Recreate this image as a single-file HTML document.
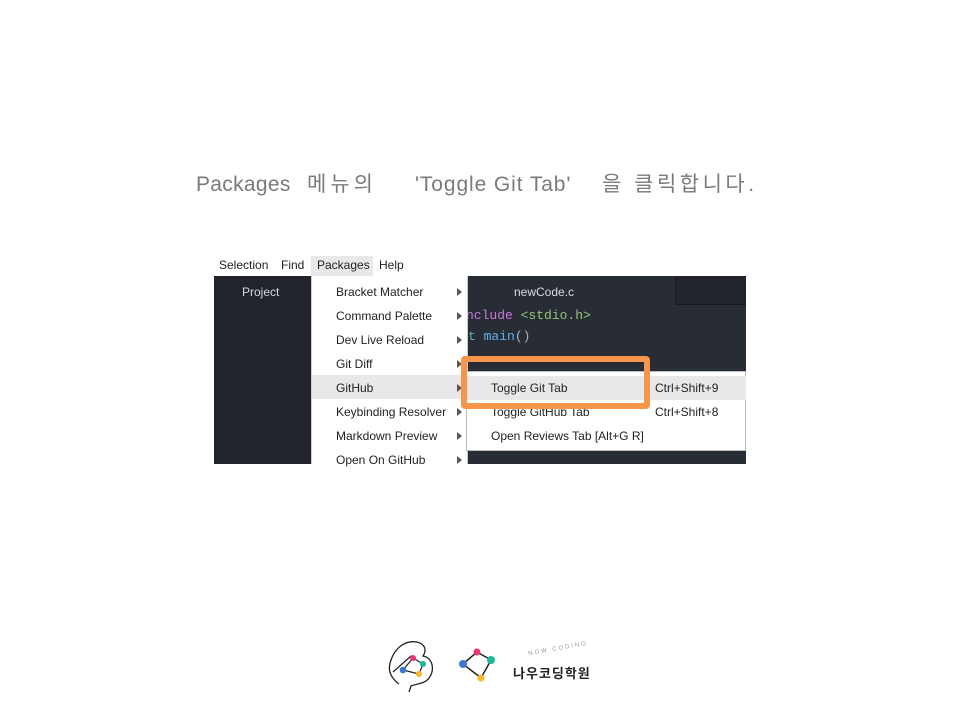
<!DOCTYPE html>
<html><head><meta charset="utf-8"><style>
body{margin:0;width:960px;height:720px;background:#fff;position:relative;overflow:hidden;font-family:"Liberation Sans","Noto Sans CJK KR",sans-serif}
.a{position:absolute;white-space:nowrap}
.title{top:170px;font-size:21px;line-height:30px;color:#7a7a7a}
.mb{font-size:12px;color:#222;top:258px}
.mi{font-size:12px;color:#222}
.arr{position:absolute;width:0;height:0;border-left:5px solid #555;border-top:4px solid transparent;border-bottom:4px solid transparent}
.code{font-family:"Liberation Mono",monospace;font-size:13px}
</style></head><body>
<div class="a title" style="left:196px;letter-spacing:0.3px">Packages</div>
<div class="a title" style="left:307px;letter-spacing:4px">메뉴의</div>
<div class="a title" style="left:415px;letter-spacing:0.9px">'Toggle Git Tab'</div>
<div class="a title" style="left:602px;letter-spacing:3.5px">을 클릭합니다.</div>

<div class="a" style="left:311px;top:256px;width:62px;height:20px;background:#e8e8ea"></div>
<div class="a mb" style="left:219px">Selection</div>
<div class="a mb" style="left:281px">Find</div>
<div class="a mb" style="left:317px">Packages</div>
<div class="a mb" style="left:379px">Help</div>

<div class="a" style="left:214px;top:276px;width:532px;height:188px;background:#282c34"></div>
<div class="a" style="left:214px;top:276px;width:97px;height:188px;background:#21252b"></div>
<div class="a" style="left:675px;top:276px;width:71px;height:29px;background:#21252b;border-left:1px solid #181a1f;border-bottom:1px solid #181a1f;box-sizing:border-box"></div>
<div class="a" style="left:242px;top:285px;font-size:12px;color:#d7dae0">Project</div>
<div class="a" style="left:514px;top:285px;font-size:12px;color:#d7dae0">newCode.c</div>
<div class="a code" style="left:466px;top:308px;color:#c678dd">nclude <span style="color:#98c379">&lt;stdio.h&gt;</span></div>
<div class="a code" style="left:468px;top:329px;color:#56b6c2">t <span style="color:#61afef">main</span><span style="color:#abb2bf">()</span></div>

<div class="a" style="left:311px;top:276px;width:157px;height:188px;background:#fff;border-left:1px solid #ccc;border-right:1px solid #ccc;box-sizing:border-box"></div>
<div class="a" style="left:312px;top:375px;width:155px;height:24px;background:#e8e8eb"></div>
<div class="a mi" style="left:336px;top:285px">Bracket Matcher</div>
<div class="a mi" style="left:336px;top:309px">Command Palette</div>
<div class="a mi" style="left:336px;top:333px">Dev Live Reload</div>
<div class="a mi" style="left:336px;top:357px">Git Diff</div>
<div class="a mi" style="left:336px;top:381px">GitHub</div>
<div class="a mi" style="left:336px;top:405px">Keybinding Resolver</div>
<div class="a mi" style="left:336px;top:429px">Markdown Preview</div>
<div class="a mi" style="left:336px;top:453px">Open On GitHub</div>
<div class="arr" style="left:457px;top:288px"></div>
<div class="arr" style="left:457px;top:312px"></div>
<div class="arr" style="left:457px;top:336px"></div>
<div class="arr" style="left:457px;top:360px"></div>
<div class="arr" style="left:457px;top:384px"></div>
<div class="arr" style="left:457px;top:408px"></div>
<div class="arr" style="left:457px;top:432px"></div>
<div class="arr" style="left:457px;top:456px"></div>

<div class="a" style="left:466px;top:371px;width:280px;height:80px;background:#fff;border:1px solid #bbb;box-sizing:border-box"></div>
<div class="a" style="left:467px;top:376px;width:279px;height:24px;background:#e8e8eb"></div>
<div class="a mi" style="left:491px;top:381px">Toggle Git Tab</div>
<div class="a mi" style="left:655px;top:381px">Ctrl+Shift+9</div>
<div class="a mi" style="left:491px;top:405px">Toggle GitHub Tab</div>
<div class="a mi" style="left:655px;top:405px">Ctrl+Shift+8</div>
<div class="a mi" style="left:491px;top:429px">Open Reviews Tab [Alt+G R]</div>
<div class="a" style="left:461px;top:356px;width:189px;height:53px;border:6px solid #f7964a;border-radius:4px;box-sizing:border-box"></div>

<svg class="a" style="left:385px;top:636px" width="60" height="56" viewBox="0 0 60 56">
<path d="M14 48 C6 42 2 34 6 24 C10 12 20 4 32 6 C40 8 42 14 38 20 C48 22 50 34 44 42 C40 48 30 48 26 50 L24 56" fill="none" stroke="#222" stroke-width="1.3"/>
<path d="M8 36 L26 20" stroke="#222" stroke-width="1.2"/>
<path d="M18 34 L28 22 L38 28 L34 38 Z" fill="none" stroke="#222" stroke-width="1.2"/>
<circle cx="28" cy="22" r="3" fill="#e8386d"/><circle cx="38" cy="28" r="3" fill="#1fb59a"/><circle cx="34" cy="38" r="3" fill="#f7b928"/><circle cx="18" cy="34" r="3.3" fill="#3b78d1"/>
</svg>
<svg class="a" style="left:455px;top:644px" width="50" height="40" viewBox="0 0 50 40">
<path d="M8 20 L22 8 L36 16 L26 34 Z" fill="none" stroke="#222" stroke-width="1.5"/>
<circle cx="22" cy="8" r="3.5" fill="#e8386d"/><circle cx="36" cy="16" r="4" fill="#1fb59a"/><circle cx="26" cy="34" r="3.5" fill="#f7b928"/><circle cx="8" cy="20" r="4" fill="#3b78d1"/>
</svg>
<div class="a" style="left:528px;top:646px;font-size:6px;color:#999;letter-spacing:2px;transform:rotate(-10deg)">NOW CODING</div>
<div class="a" style="left:513px;top:663px;font-size:13px;font-weight:bold;color:#222;letter-spacing:1px">나우코딩학원</div>
</body></html>
